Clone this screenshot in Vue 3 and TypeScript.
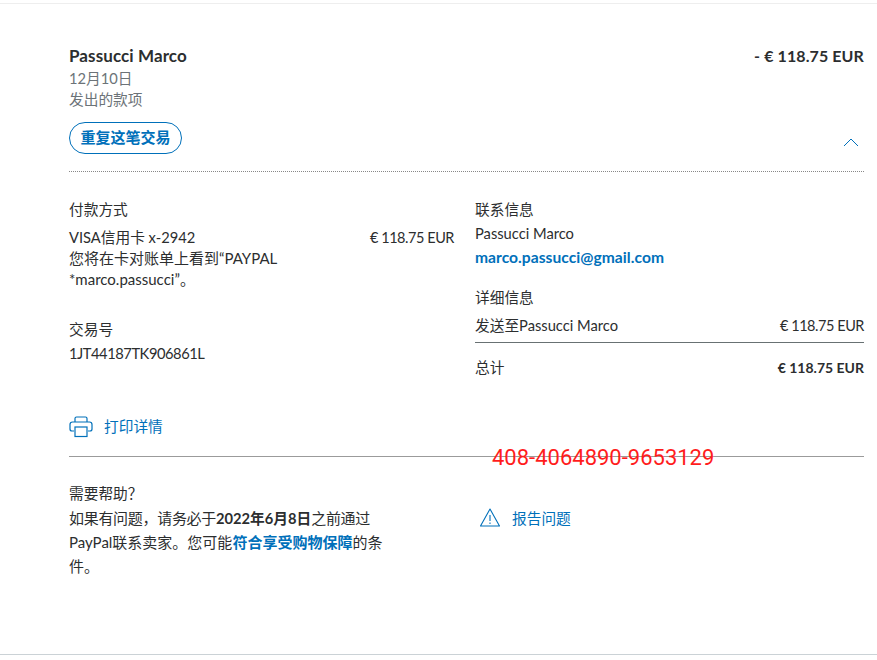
<script setup lang="ts">
const amount = '€ 118.75 EUR'
</script>

<template>
  <div class="page">
    <div class="card">
      <header class="head">
        <div class="head-left">
          <div class="name">Passucci Marco</div>
          <div class="sub">12月10日</div>
          <div class="sub">发出的款项</div>
          <button class="repeat"><span>重复这笔交易</span></button>
        </div>
        <div class="head-right">
          <div class="total">- {{ amount }}</div>
          <svg class="chev" width="16" height="10" viewBox="0 0 16 10" fill="none">
            <path d="M1 9 L8 2 L15 9" stroke="#0070ba" stroke-width="1" />
          </svg>
        </div>
      </header>

      <section class="details">
        <div class="col-left">
          <div class="label">付款方式</div>
          <div class="pay-row">
            <div class="pay-text">
              <div>VISA信用卡 x-2942</div>
              <div class="pay-note">您将在卡对账单上看到“PAYPAL *marco.passucci”。</div>
            </div>
            <div class="amt">{{ amount }}</div>
          </div>
          <div class="label tx-label">交易号</div>
          <div class="tx">1JT44187TK906861L</div>
        </div>
        <div class="col-right">
          <div class="label">联系信息</div>
          <div class="line">Passucci Marco</div>
          <div class="email">marco.passucci@gmail.com</div>
          <div class="label det-label">详细信息</div>
          <div class="row underlined"><span>发送至Passucci Marco</span><span class="amt">{{ amount }}</span></div>
          <div class="row sum"><span>总计</span><strong class="sum-amt">{{ amount }}</strong></div>
        </div>
      </section>

      <div class="print">
        <svg width="24" height="22" viewBox="0 0 24 22" fill="none" stroke="#0070ba" stroke-width="1.2">
          <path d="M6 6V2.500C6 1.700 6.700 1 7.500 1h9c.8 0 1.500.7 1.500 1.500V6" />
          <path d="M5 15H3c-1.100 0-2-.9-2-2V8.500C1 7.100 2.100 6 3.500 6h17C21.900 6 23 7.100 23 8.500V13c0 1.100-.9 2-2 2h-2" />
          <rect x="6" y="11" width="12" height="9.500" />
        </svg>
        <span class="print-text">打印详情</span>
      </div>

      <div class="divider">
        <span class="stamp">408-4064890-9653129</span>
      </div>

      <section class="help">
        <div class="help-text">
          <div>需要帮助？</div>
          <div class="help-body"><span class="tight">如果有问题，请务必于</span><b>2022年6月8日</b><span class="tight">之前通过</span>PayPal联系卖家。您可能<a>符合享受购物保障</a>的条件。</div>
        </div>
        <div class="report">
          <svg width="20" height="19" viewBox="0 0 20 19" fill="none" stroke="#0070ba" stroke-width="1.1">
            <path d="M10 1 L19.500 18 H.5 Z" stroke-linejoin="round" />
            <path d="M10 7 V13" />
            <path d="M10 14.500 V16" />
          </svg>
          <span>报告问题</span>
        </div>
      </section>
    </div>
  </div>
</template>

<style>
html, body { margin: 0; background: #fff; }
</style>

<style scoped>
.page {
  width: 877px;
  height: 660px;
  box-sizing: border-box;
  padding-top: 3px;
  overflow: hidden;
  font-family: "Lato", "Noto Sans CJK SC", sans-serif;
  font-size: 14.700px;
  color: #2c2e2f;
}
.card {
  height: 652px;
  box-sizing: border-box;
  border-top: 1px solid #eeeeee;
  border-bottom: 1px solid #cbd2d6;
  padding: 39px 13px 0 69px;
}
.head {
  display: flex;
  justify-content: space-between;
  border-bottom: 1px dotted #888;
  height: 129px;
  box-sizing: border-box;
}
.name { font-size: 17px; font-weight: 700; line-height: 26px; letter-spacing: 0.1px; }
.sub { color: #6c7378; line-height: 21px; margin-top: -1px; }
.sub + .sub { margin-top: 0; }
.repeat {
  margin-top: 12px;
  display: block;
  width: 113px;
  height: 32px;
  padding: 0 0 3px;
  border: 1px solid #0070ba;
  border-radius: 16px;
  background: #fff;
  color: #0070ba;
  font: 700 15px "Lato", "Noto Sans CJK SC", sans-serif;
}
.head-right {
  display: flex;
  flex-direction: column;
  align-items: flex-end;
  justify-content: space-between;
}
.total { font-size: 16px; font-weight: 700; line-height: 26px; letter-spacing: 0.1px; }
.chev { margin-bottom: 24px; margin-right: 5px; }
.details {
  display: flex;
  gap: 21px;
  padding-top: 26px;
  height: 232px;
  box-sizing: border-box;
}
.col-left { width: 385px; }
.col-right { width: 389px; }
.label { line-height: 22px; }
.pay-row {
  display: flex;
  justify-content: space-between;
  margin-top: 7px;
  line-height: 21px;
}
.pay-text { width: 225px; }
.pay-note { font-size: 15px; }
.amt { font-size: 14.500px; letter-spacing: -0.45px; }
.sum-amt { font-size: 14px; }
.tx-label { margin-top: 28px; }
.tx { font-size: 14.700px; letter-spacing: -0.45px; line-height: 22px; margin-top: 2px; }
.line { line-height: 22px; margin-top: 2px; }
.email { color: #0070ba; font-weight: 700; font-size: 15.600px; line-height: 26px; letter-spacing: 0.04px; }
.det-label { margin-top: 16px; }
.row { display: flex; justify-content: space-between; align-items: baseline; }
.underlined {
  margin-top: 5px;
  height: 29px;
  line-height: 24px;
  border-bottom: 1px solid #687173;
}
.sum { margin-top: 13px; line-height: 22px; }
.print {
  display: flex;
  align-items: center;
  gap: 11px;
  height: 24px;
  margin-top: 11px;
  color: #0070ba;
}
.print-text { padding-bottom: 4px; }
.divider {
  position: relative;
  margin-top: 17px;
  border-top: 1px solid #9b9b9b;
}
.stamp {
  position: absolute;
  left: 423px;
  top: -13px;
  font-family: "Roboto", "Liberation Sans", sans-serif;
  font-size: 22px;
  line-height: 28px;
  color: #ff1c1c;
}
.help {
  display: flex;
  gap: 91px;
  padding-top: 24px;
}
.help-text { width: 316px; line-height: 24px; }
.help-body { margin-top: 1px; font-size: 15px; }
.tight { letter-spacing: -0.3px; }
.help-text b { font-weight: 700; font-size: 14.700px; }
.help-text a { color: #0070ba; font-weight: 700; }
.report {
  display: flex;
  align-items: center;
  gap: 12px;
  height: 24px;
  margin-top: 24px;
  margin-left: 4px;
  color: #0070ba;
}
</style>
